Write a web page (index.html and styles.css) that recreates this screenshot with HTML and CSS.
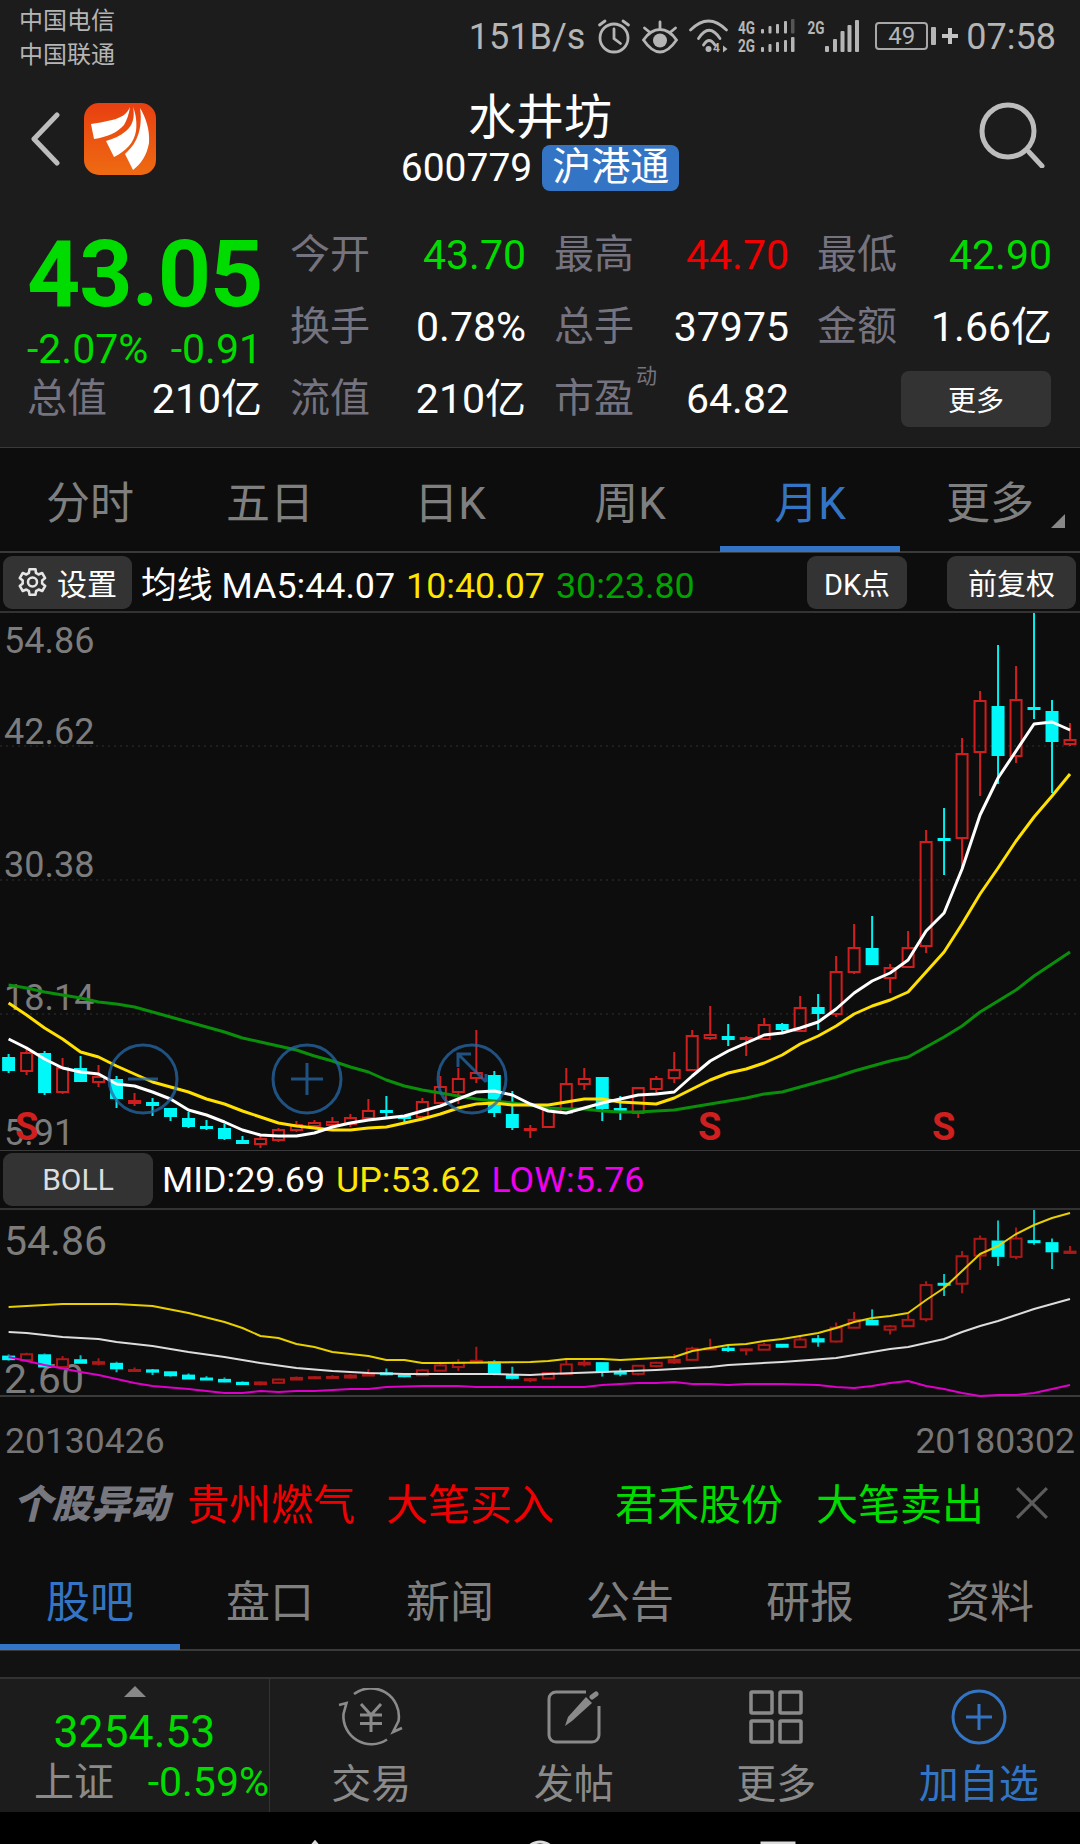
FILE: index.html
```html
<!DOCTYPE html>
<html lang="zh-CN">
<head>
    <meta charset="UTF-8">
    <meta name="viewport" content="width=device-width, initial-scale=1.0">
    <title>水井坊</title>
    <link rel="stylesheet" href="styles.css">
</head>
<body>
    <div class="status-bar">
        <div class="carriers">
            <span>中国电信</span>
            <span>中国联通</span>
        </div>
        <div class="status-right">
            <span class="net-speed">151B/s</span>
            <svg class="ic-alarm" width="34" height="36" viewBox="0 0 34 36" fill="none" stroke="#b5b5b5" stroke-width="2.8" stroke-linecap="round">
                <circle cx="17" cy="19" r="14"/>
                <path d="M17 10v9.500l6.500 5M2.500 6L8 2M31.500 6L26 2"/>
            </svg>
            <svg class="ic-eye" width="36" height="34" viewBox="0 0 36 34" fill="none" stroke="#b5b5b5" stroke-width="2.8" stroke-linecap="round">
                <path d="M1.500 20C7 12 12 9.500 18 9.500s11 2.500 16.500 10.500C29 28 24 32 18 32S7 28 1.500 20z"/>
                <circle cx="18" cy="20.500" r="7" fill="#b5b5b5" stroke="none"/>
                <path d="M2.500 8l5.500 4.500M33.500 8L28 12.500M18 2v6"/>
            </svg>
            <svg class="ic-wifi" width="40" height="36" viewBox="0 0 40 36" fill="none" stroke="#b5b5b5" stroke-width="2.8" stroke-linecap="round">
                <path d="M1.500 11Q19.500 -7 37.500 11M9.500 19.500Q20 3 31 19.500M14.500 26Q20 17 26 26"/>
                <circle cx="19.500" cy="30" r="3" fill="#b5b5b5" stroke="none"/>
                <text x="24" y="33" class="micro-text">4</text>
                <path d="M34 26.500l4.500 3.500-4.500 3.500z" fill="#b5b5b5" stroke="none"/>
            </svg>
            <svg class="ic-sim" width="58" height="36" viewBox="0 0 58 36" fill="#b5b5b5">
                <text x="1" y="14.500" class="tiny-text" textLength="17" lengthAdjust="spacingAndGlyphs">4G</text>
                <text x="1" y="33" class="tiny-text" textLength="17" lengthAdjust="spacingAndGlyphs">2G</text>
                <rect x="24" y="10" width="3" height="4.500" rx="1"/><rect x="31.500" y="7" width="3" height="7.500" rx="1"/><rect x="39" y="5" width="3" height="9.500" rx="1"/><rect x="47" y="2" width="3" height="12.500" rx="1"/><rect x="54" y="0" width="3.500" height="14.500" rx="1" fill="#555"/>
                <rect x="24" y="28" width="3" height="5" rx="1"/><rect x="31.500" y="25" width="3" height="8" rx="1"/><rect x="39" y="23" width="3" height="10" rx="1"/><rect x="47" y="21" width="3" height="12" rx="1"/><rect x="54" y="18" width="3.500" height="15" rx="1"/>
            </svg>
            <svg class="ic-signal" width="54" height="36" viewBox="0 0 54 36" fill="#b5b5b5">
                <text x="1.500" y="15" class="tiny-text" textLength="17" lengthAdjust="spacingAndGlyphs">2G</text>
                <rect x="19" y="27" width="4" height="6" rx="1"/><rect x="27" y="20" width="4" height="13" rx="1"/><rect x="34.500" y="12" width="4" height="21" rx="1"/><rect x="41.500" y="6" width="4" height="27" rx="1"/><rect x="49" y="1" width="4" height="32" rx="1"/>
            </svg>
            <div class="battery">49</div>
            <div class="battery-tip"></div>
            <svg class="ic-charge" width="16" height="16" viewBox="0 0 16 16" fill="#c4c4c4">
                <rect x="6" y="0" width="4" height="16"/><rect x="0" y="6" width="16" height="4"/>
            </svg>
            <span class="clock">07:58</span>
        </div>
    </div>

    <div class="app-header">
        <div class="header-left">
            <svg class="ic-back" width="30" height="54" viewBox="0 0 30 54" fill="none" stroke="#bdbdbd" stroke-width="5" stroke-linecap="round" stroke-linejoin="round">
                <path d="M27 3L4 27l23 24"/>
            </svg>
            <svg class="logo" width="72" height="72" viewBox="0 0 72 72">
                <defs>
                    <linearGradient id="logoBg" x1="0" y1="0" x2="0" y2="1">
                        <stop offset="0" stop-color="#e83f10"/>
                        <stop offset="1" stop-color="#ee6b12"/>
                    </linearGradient>
                </defs>
                <rect width="72" height="72" rx="15" fill="url(#logoBg)"/>
                <path d="M46 4c-3 7-9 11-18 13-8 2-15 3-21 4l3 15c13-2 23-6 30-14 3-5 5-11 6-18z" fill="#fff"/>
                <path d="M49 4c2 10 0 18-7 24-6 5-13 8-20 10l8 16c12-6 20-14 22-26 1-8 0-17-3-24z" fill="#fff"/>
                <path d="M56 5c2 13 0 24-4 32-3 6-7 10-11 14l8 16c8-6 14-15 16-27 1-13-3-25-9-35z" fill="#fff"/>
            </svg>
        </div>
        <div class="header-center">
            <div class="stock-name">水井坊</div>
            <div class="stock-code-line">
                <span>600779</span>
                <span class="hk-badge">沪港通</span>
            </div>
        </div>
        <div class="header-right">
            <svg width="66" height="66" viewBox="0 0 66 66" fill="none" stroke="#bdbdbd" stroke-width="5" stroke-linecap="round">
                <circle cx="29" cy="29" r="26"/>
                <path d="M50 50l13 14"/>
            </svg>
        </div>
    </div>

    <div class="quote">
        <div class="price-box">
            <div class="price">43.05</div>
            <div class="change">
                <span>-2.07%</span>
                <span>-0.91</span>
            </div>
        </div>
        <div class="stat"><span class="stat-label">今开</span><span class="green">43.70</span></div>
        <div class="stat"><span class="stat-label">最高</span><span class="red">44.70</span></div>
        <div class="stat"><span class="stat-label">最低</span><span class="green">42.90</span></div>
        <div class="stat"><span class="stat-label">换手</span><span>0.78%</span></div>
        <div class="stat"><span class="stat-label">总手</span><span>37975</span></div>
        <div class="stat"><span class="stat-label">金额</span><span>1.66亿</span></div>
        <div class="stat"><span class="stat-label">总值</span><span>210亿</span></div>
        <div class="stat"><span class="stat-label">流值</span><span>210亿</span></div>
        <div class="stat stat-pe"><span class="stat-label">市盈</span><span class="pe-mark">动</span><span>64.82</span></div>
        <div class="stat stat-more"><button class="more-btn">更多</button></div>
    </div>

    <div class="tabs period-tabs">
        <div class="tab">分时</div>
        <div class="tab">五日</div>
        <div class="tab">日K</div>
        <div class="tab">周K</div>
        <div class="tab active">月K</div>
        <div class="tab tab-more">更多</div>
    </div>

    <div class="tool-bar">
        <button class="tool-btn btn-setting">
            <svg width="36" height="36" viewBox="0 0 24 24" fill="none" stroke="#e6e6e6" stroke-width="1.700" stroke-linejoin="round">
                <path d="M19.400 13a7.500 7.500 0 0 0 0-2l2-1.600-2-3.400-2.400 1a7.500 7.500 0 0 0-1.700-1L15 3.500h-4l-.4 2.500a7.500 7.500 0 0 0-1.700 1l-2.400-1-2 3.400 2 1.600a7.500 7.500 0 0 0 0 2l-2 1.600 2 3.400 2.400-1a7.500 7.500 0 0 0 1.700 1l.4 2.500h4l.4-2.500a7.500 7.500 0 0 0 1.700-1l2.400 1 2-3.400z"/>
                <circle cx="13" cy="12" r="3"/>
            </svg>
            设置
        </button>
        <div class="legend">
            <span>均线 MA5:44.07</span>
            <span class="yellow">10:40.07</span>
            <span class="dark-green">30:23.80</span>
        </div>
        <button class="tool-btn btn-dk">DK点</button>
        <button class="tool-btn btn-fq">前复权</button>
    </div>

    <div class="chart chart-main">
        <span class="axis-label" data-y="28">54.86</span>
        <span class="axis-label" data-y="119">42.62</span>
        <span class="axis-label" data-y="252">30.38</span>
        <span class="axis-label" data-y="385">18.14</span>
        <span class="axis-label" data-y="520">5.91</span>
        <svg id="mainChart" class="chart-svg" width="1080" height="537"></svg>
        <svg class="chart-svg" width="1080" height="537" fill="none" stroke="#2569a8" stroke-opacity="0.75" stroke-width="3">
            <circle cx="143" cy="466" r="34"/>
            <path d="M128 466h30"/>
            <circle cx="307" cy="466" r="34"/>
            <path d="M291 466h32M307 450v32"/>
            <circle cx="472" cy="466" r="34"/>
            <path d="M458 454v-13h13M458 441l28 28M486 469v-8"/>
        </svg>
        <span class="s-mark s-one">S</span>
        <span class="s-mark s-two">S</span>
        <span class="s-mark s-three">S</span>
    </div>

    <div class="tool-bar boll-bar">
        <button class="tool-btn btn-boll">BOLL</button>
        <div class="legend">
            <span>MID:29.69</span>
            <span class="yellow">UP:53.62</span>
            <span class="magenta">LOW:5.76</span>
        </div>
    </div>

    <div class="chart chart-boll">
        <span class="axis-label axis-big" data-y="31">54.86</span>
        <span class="axis-label axis-big" data-y="169">2.60</span>
        <svg id="bollChart" class="chart-svg" width="1080" height="187"></svg>
    </div>

    <div class="dates">
        <span>20130426</span>
        <span>20180302</span>
    </div>

    <div class="alerts">
        <span class="alerts-title">个股异动</span>
        <span class="alert-text red alert-a">贵州燃气</span>
        <span class="alert-text red alert-b">大笔买入</span>
        <span class="alert-text green alert-c">君禾股份</span>
        <span class="alert-text green alert-d">大笔卖出</span>
        <svg class="alert-close" width="34" height="34" viewBox="0 0 32 32" stroke="#5c5c5c" stroke-width="3">
            <path d="M2 2l28 28M30 2L2 30"/>
        </svg>
    </div>

    <div class="tabs info-tabs">
        <div class="tab active">股吧</div>
        <div class="tab">盘口</div>
        <div class="tab">新闻</div>
        <div class="tab">公告</div>
        <div class="tab">研报</div>
        <div class="tab">资料</div>
    </div>

    <div class="tabs-gap"></div>

    <div class="bottom-bar">
        <div class="index-box">
            <div class="index-arrow"></div>
            <div class="index-value">3254.53</div>
            <div class="index-line">
                <span class="index-name">上证</span>
                <span class="green">-0.59%</span>
            </div>
        </div>
        <div class="bottom-item">
            <svg width="66" height="58" viewBox="0 0 66 58" fill="none" stroke="#8a8a8a" stroke-width="2.600">
                <path d="M16 6A28 28 0 0 1 60.500 33L55 44l9-4"/>
                <path d="M49 51.500A28 28 0 0 1 5.500 26L8.500 15 1 17"/>
                <path d="M23 16l10 11 10-11M33 27v17M22 27h22M22 35.500h22" stroke-width="3"/>
            </svg>
            <span>交易</span>
        </div>
        <div class="bottom-item">
            <svg width="54" height="54" viewBox="0 0 54 54" fill="none" stroke="#8a8a8a" stroke-width="3">
                <path d="M39 2H9a7 7 0 0 0-7 7v36a7 7 0 0 0 7 7h36a7 7 0 0 0 7-7V16"/>
                <path d="M18 36l3-9 18-20 6 6-20 18z" fill="#8a8a8a" stroke="none"/>
                <path d="M45 7l4-3" stroke-width="5" stroke-linecap="round"/>
            </svg>
            <span>发帖</span>
        </div>
        <div class="bottom-item">
            <svg width="54" height="54" viewBox="0 0 54 54" fill="none" stroke="#8a8a8a" stroke-width="3.500">
                <rect x="2" y="2" width="21" height="21" rx="1"/>
                <rect x="31" y="2" width="21" height="21" rx="1"/>
                <rect x="2" y="31" width="21" height="21" rx="1"/>
                <rect x="31" y="31" width="21" height="21" rx="1"/>
            </svg>
            <span>更多</span>
        </div>
        <div class="bottom-item item-blue">
            <svg width="56" height="56" viewBox="0 0 56 56" fill="none" stroke="#3375c4" stroke-width="3">
                <circle cx="28" cy="28" r="26"/>
                <path d="M15 28h26M28 15v26"/>
            </svg>
            <span>加自选</span>
        </div>
    </div>

    <div class="nav-bar">
        <svg width="1080" height="32" fill="none" stroke="#dcdcdc" stroke-width="3">
            <path d="M298 50l17-20 17 20"/>
            <circle cx="540" cy="46" r="16"/>
            <rect x="762" y="31" width="32" height="30"/>
        </svg>
    </div>

    <script src="chart.js"></script>
</body>
</html>
```
FILE: styles.css
```css
* {
    font-family: Roboto, "Noto Sans CJK SC", sans-serif;
    padding: 0;
    margin: 0;
    box-sizing: border-box;
}

body {
    width: 1080px;
    height: 1844px;
    overflow: hidden;
    background-color: #0d0d0d;
    color: #fff;
}

button {
    border: none;
    color: #fff;
}

.green { color: #00dc00; }
.red { color: #f00000; }
.yellow { color: #ffe600; }
.dark-green { color: #00a400; }
.magenta { color: #f000f0; }

/* status bar */
.status-bar {
    height: 90px;
    padding: 4px 24px 0 19px;
    display: flex;
    justify-content: space-between;
    align-items: flex-start;
    background-color: #1c1c1c;
}

.carriers {
    display: flex;
    flex-direction: column;
    font-size: 24px;
    line-height: 34px;
    color: #b5b5b5;
}

.status-right {
    display: flex;
    align-items: center;
    height: 66px;
    color: #b5b5b5;
}

.status-right svg {
    overflow: visible;
}

.net-speed {
    font-size: 36px;
    margin-right: 12px;
}

.clock {
    font-size: 36px;
    margin-left: 8px;
}

.ic-alarm { margin-right: 11px; }
.ic-eye { margin-right: 11px; }
.ic-wifi { margin-right: 8px; }
.ic-sim { margin-right: 11px; }
.ic-signal { margin-right: 15px; }

.tiny-text {
    font-size: 18px;
    font-weight: 700;
    fill: #b5b5b5;
}

.micro-text {
    font-size: 12px;
    font-weight: 700;
    fill: #b5b5b5;
    stroke: none;
}

.battery {
    width: 53px;
    height: 28px;
    margin-bottom: 3px;
    border: 2px solid #a8a8a8;
    border-radius: 4px;
    font-size: 24px;
    line-height: 24px;
    text-align: center;
}

.battery-tip {
    width: 5px;
    height: 18px;
    margin: 0 6px 3px 3px;
    border-radius: 1px;
    background-color: #b5b5b5;
}

.ic-charge { margin-bottom: 3px; }

/* header */
.app-header {
    height: 110px;
    display: grid;
    grid-template-columns: 1fr auto 1fr;
    background-color: #1c1c1c;
}

.header-left {
    display: flex;
    align-items: center;
    padding: 0 0 12px 30px;
}

.logo { margin-left: 24px; }

.header-center {
    display: flex;
    flex-direction: column;
    align-items: center;
}

.stock-name {
    height: 55px;
    font-size: 48px;
    line-height: 55px;
}

.stock-code-line {
    display: flex;
    align-items: center;
    gap: 10px;
    height: 46px;
    font-size: 39px;
}

.hk-badge {
    height: 46px;
    padding: 0 10px;
    font-size: 39px;
    line-height: 44px;
    background-color: #3375c4;
    border-radius: 8px;
}

.header-right {
    display: flex;
    justify-content: flex-end;
    align-items: center;
    padding: 0 35px 20px 0;
}

/* quote */
.quote {
    height: 248px;
    padding: 19px 0 0 27px;
    display: grid;
    grid-template-columns: 235px 236px 235px 235px;
    grid-auto-rows: 72px;
    column-gap: 28px;
    background-color: #1c1c1c;
    border-bottom: 1px solid #3a3a3a;
    font-size: 41px;
}

.price-box {
    grid-row: span 2;
}

.price {
    height: 112px;
    font-size: 93px;
    line-height: 112px;
    font-weight: 700;
    color: #00dc00;
    letter-spacing: -1px;
}

.change {
    display: flex;
    justify-content: space-between;
    margin-top: 2px;
    font-size: 41px;
    line-height: 32px;
    color: #00dc00;
}

.stat {
    position: relative;
    display: flex;
    justify-content: space-between;
    align-items: center;
    line-height: 46px;
}

.stat-label {
    font-size: 40px;
    color: #75737f;
}

.pe-mark {
    position: absolute;
    left: 82px;
    top: -2px;
    font-size: 21px;
    line-height: 30px;
    color: #75737f;
}

.stat-more {
    justify-content: flex-end;
}

.more-btn {
    width: 150px;
    height: 56px;
    margin-right: 1px;
    background-color: #333;
    border-radius: 8px;
    font-size: 28px;
}

/* tabs */
.tabs {
    display: grid;
    grid-template-columns: repeat(6, 180px);
    height: 104px;
    border-bottom: 2px solid #3a3a3a;
    background-color: #0d0d0d;
}

.period-tabs { height: 105px; }

.tab {
    position: relative;
    display: flex;
    justify-content: center;
    align-items: center;
    padding-top: 1px;
    font-size: 44px;
    color: #7f7f7f;
}

.tab.active {
    color: #3375c4;
}

.tab.active::after {
    content: "";
    position: absolute;
    left: 0;
    right: 0;
    bottom: -1px;
    height: 6px;
    background-color: #3375c4;
}

.tab-more::after {
    content: "";
    position: absolute;
    right: 15px;
    bottom: 23px;
    border-left: 14px solid transparent;
    border-bottom: 14px solid #888;
}

.tabs-gap {
    height: 26px;
    background-color: #121212;
}

/* tool bars over the charts */
.tool-bar {
    position: relative;
    height: 60px;
    display: flex;
    align-items: center;
    border-bottom: 2px solid #333;
    background-color: #0d0d0d;
}

.boll-bar {
    border-top: 1px solid #3a3a3a;
}

.tool-btn {
    height: 53px;
    background-color: #333;
    border-radius: 9px;
    font-size: 29px;
    display: flex;
    justify-content: center;
    align-items: center;
}

.btn-setting {
    width: 129px;
    margin-left: 3px;
    padding-left: 10px;
    justify-content: flex-start;
    gap: 8px;
    font-size: 30px;
}

.legend {
    display: flex;
    align-items: baseline;
    gap: 11px;
    margin-left: 9px;
    font-size: 35.8px;
    white-space: nowrap;
}

.btn-dk {
    width: 100px;
    margin-left: auto;
}

.btn-fq {
    width: 129px;
    margin: 0 4px 0 40px;
}

.btn-boll {
    width: 150px;
    margin-left: 3px;
    font-size: 30px;
    color: #ddd;
}

/* charts */
.chart {
    position: relative;
    background-color: #0d0d0d;
}

.chart-main { height: 537px; }
.chart-boll { height: 187px; border-bottom: 2px solid #3a3a3a; }

.chart-svg {
    position: absolute;
    left: 0;
    top: 0;
}

.axis-label {
    position: absolute;
    left: 4px;
    font-size: 36px;
    line-height: 40px;
    color: #7c7c7c;
}

.axis-big {
    font-size: 41px;
}

.s-mark {
    position: absolute;
    top: 492px;
    font-size: 38px;
    line-height: 44px;
    font-weight: 700;
    color: #cf1f1f;
}

.s-one { left: 15px; }
.s-two { left: 698px; }
.s-three { left: 932px; }

.dates {
    height: 72px;
    padding: 24px 5px 0;
    display: flex;
    justify-content: space-between;
    font-size: 35.5px;
    line-height: 40px;
    color: #767676;
}

/* alert strip */
.alerts {
    height: 78px;
    display: flex;
    align-items: center;
    padding-bottom: 14px;
    white-space: nowrap;
}

.alerts-title {
    width: 174px;
    margin-left: 13px;
    font-size: 39px;
    font-weight: 900;
    font-style: italic;
    color: #77777f;
}

.alert-text { font-size: 42px; }
.alert-a { width: 199px; }
.alert-b { width: 229px; }
.alert-c { width: 201px; }
.alert-d { width: 199px; }

.alert-close { margin-top: 4px; }

/* bottom bar */
.bottom-bar {
    height: 135px;
    display: grid;
    grid-template-columns: 270px repeat(4, 202.5px);
    border-top: 2px solid #333;
    background-color: #1c1c1c;
}

.index-box {
    position: relative;
    display: flex;
    flex-direction: column;
    align-items: center;
    padding-top: 27px;
    border-right: 1px solid #333;
}

.index-arrow {
    position: absolute;
    top: 7px;
    left: 124px;
    border-left: 11px solid transparent;
    border-right: 11px solid transparent;
    border-bottom: 11px solid #888;
}

.index-value {
    font-size: 44.5px;
    line-height: 52px;
    color: #00dc00;
}

.index-line {
    display: flex;
    justify-content: space-between;
    align-items: baseline;
    width: 100%;
    margin-top: 1px;
    padding-left: 34px;
    font-size: 41px;
    line-height: 46px;
    white-space: nowrap;
}

.index-name {
    font-size: 40px;
    color: #8a8a8a;
}

.bottom-item {
    display: flex;
    flex-direction: column;
    align-items: center;
    padding-top: 9px;
    font-size: 40px;
    line-height: 50px;
    color: #8a8a8a;
}

.bottom-item svg {
    height: 58px;
    margin-bottom: 14px;
}

.item-blue { color: #3375c4; }

.nav-bar {
    height: 32px;
    overflow: hidden;
    background-color: #000;
}
```
FILE: chart.js
```js
// x of each monthly candle, first one at 8.6, 18px apart
const X0 = 8.6;
const STEP = 17.99;
const MAIN_TOP = 613;
const BOLL_TOP = 1210;
const BOLL_RATIO = 0.3279; // main chart px -> boll chart px

// type, body top, body bottom, wick top, wick bottom (page px of the main chart)
const candles = [
    ['c',1057,1071,1054,1073],['r',1053,1071,1048,1075],['c',1053,1093,1051,1095],['r',1068,1092,1058,1094],
    ['c',1068,1082,1056,1082],['r',1077,1082,1065,1087],['c',1079,1099,1076,1108],['r',1101,1103,1093,1106],
    ['c',1102,1106,1098,1116],['c',1108,1117,1108,1121],['c',1118,1127,1112,1128],['c',1127,1128,1120,1130],
    ['c',1128,1139,1124,1140],['c',1140,1144,1136,1144],['r',1139,1144,1136,1148],['r',1130,1140,1128,1142],
    ['r',1125,1130,1121,1132],['r',1123,1126,1120,1128],['r',1122,1125,1117,1127],['r',1118,1124,1114,1127],
    ['r',1111,1118,1099,1119],['c',1111,1112,1096,1117],['c',1117,1118,1116,1123],['r',1102,1117,1098,1118],
    ['r',1087,1103,1076,1104],['r',1079,1092,1068,1104],['r',1073,1078,1030,1083],['c',1075,1113,1071,1117],
    ['c',1114,1128,1091,1130],['r',1129,1130,1125,1138],['r',1110,1127,1110,1127],['r',1084,1113,1068,1114],
    ['r',1079,1084,1068,1090],['c',1077,1109,1077,1121],['c',1109,1111,1096,1120],['r',1088,1113,1088,1118],
    ['r',1079,1089,1076,1093],['r',1070,1078,1052,1083],['r',1036,1070,1030,1070],['r',1035,1038,1006,1040],
    ['c',1036,1040,1024,1046],['r',1038,1039,1036,1056],['r',1025,1039,1018,1039],['c',1024,1030,1023,1032],
    ['r',1008,1031,996,1032],['c',1007,1014,994,1030],['r',972,1014,956,1017],['r',948,972,924,974],
    ['c',948,965,916,965],['r',968,978,964,993],['r',948,967,931,968],['r',842,946,830,953],
    ['c',838,841,808,875],['r',754,838,738,867],['r',701,752,691,796],['c',706,756,645,784],
    ['r',700,756,666,763],['c',708,709,613,719],['c',711,742,700,793],['r',740,744,723,746]
];

// main chart lines, one y for each candle
const ma5 = [1039,1048,1059,1068,1072,1074,1084,1086,1092,1099,1110,1115,1122,1130,1135,1136,1136,1133,1127,1123,1120,1118,1116,1111,1106,1099,1092,1091,1095,1104,1111,1113,1108,1103,1099,1095,1094,1092,1076,1061,1051,1043,1035,1033,1028,1022,1009,993,981,973,960,931,913,869,815,778,751,724,722,730];
const ma10 = [1003,1015,1028,1039,1052,1057,1066,1074,1082,1087,1092,1099,1104,1111,1117,1123,1126,1128,1130,1130,1128,1127,1123,1119,1114,1108,1104,1103,1105,1105,1105,1102,1099,1099,1102,1103,1104,1098,1089,1080,1073,1069,1063,1055,1044,1036,1026,1014,1006,1000,992,972,952,924,894,868,841,817,796,774];
const ma30 = [985,988,992,995,998,1002,1004,1007,1012,1017,1022,1027,1032,1038,1042,1046,1050,1056,1061,1067,1072,1080,1086,1090,1093,1096,1099,1101,1103,1105,1108,1109,1109,1111,1112,1112,1111,1110,1107,1104,1101,1098,1094,1092,1087,1082,1077,1071,1066,1061,1057,1047,1037,1026,1012,1001,990,976,964,952];

// boll lines, [candle index, page y]
const bollUp = [[0,1307],[3,1304],[6,1304],[8,1306],[10,1313],[12,1322],[13,1328],[14,1336],[15,1338],[16,1344],[17,1347],[18,1352],[20,1356],[21,1360],[22,1360],[23,1363],[24,1363],[29,1362],[30,1361],[31,1359],[32,1359],[33,1359],[34,1360],[35,1359],[36,1358],[37,1357],[38,1351],[39,1348],[40,1345],[41,1344],[42,1341],[43,1339],[44,1336],[45,1333],[46,1328],[47,1322],[48,1318],[49,1316],[50,1313],[51,1300],[52,1288],[53,1271],[54,1254],[55,1246],[56,1234],[57,1225],[58,1218],[59,1213]];
const bollMid = [[0,1332],[1,1333],[3,1337],[5,1339],[6,1342],[8,1346],[10,1352],[12,1357],[14,1363],[16,1368],[18,1371],[20,1373],[22,1374],[27,1374],[29,1375],[30,1374],[33,1372],[36,1370],[39,1367],[40,1365],[43,1362],[46,1358],[47,1355],[48,1352],[49,1349],[50,1347],[51,1343],[52,1339],[53,1332],[54,1326],[55,1321],[56,1315],[57,1309],[58,1304],[59,1299]];
const bollLow = [[0,1357],[2,1365],[4,1372],[5,1375],[7,1383],[8,1386],[10,1389],[12,1393],[13,1393],[14,1391],[15,1392],[16,1391],[17,1391],[19,1389],[20,1389],[21,1387],[23,1386],[25,1386],[26,1387],[32,1387],[33,1385],[35,1383],[36,1383],[37,1382],[38,1384],[39,1384],[40,1385],[41,1384],[43,1384],[45,1385],[46,1387],[47,1388],[48,1386],[49,1383],[50,1381],[51,1386],[52,1389],[53,1393],[54,1396],[55,1395],[56,1395],[57,1393],[58,1389],[59,1385]];

const SVG_NS = 'http://www.w3.org/2000/svg';

function addShape(svg, name, attrs) {
    const el = document.createElementNS(SVG_NS, name);
    for (const key in attrs) {
        el.setAttribute(key, attrs[key]);
    }
    svg.appendChild(el);
}

function xAt(i) {
    return X0 + STEP * i;
}

function drawCandles(svg, mapY, colors, width) {
    candles.forEach((c, i) => {
        const x = xAt(i);
        const [type, bodyTop, bodyBottom, wickTop, wickBottom] = c;
        const top = mapY(bodyTop);
        const bottom = mapY(bodyBottom);
        const color = type === 'r' ? colors.red : colors.wick;
        const fill = type === 'r' ? colors.red : colors.cyan;
        addShape(svg, 'path', {
            d: `M${x} ${mapY(wickTop)}V${top}M${x} ${bottom}V${mapY(wickBottom)}`,
            stroke: color,
            'stroke-width': width
        });
        if (bottom - top < 3) {
            // flat candle, drawn as a bar
            addShape(svg, 'rect', { x: x - 6.5, y: top - 1, width: 13, height: Math.max(bottom - top, 1) + 2, fill: fill });
        } else if (type === 'r') {
            addShape(svg, 'rect', { x: x - 5.5, y: top, width: 11, height: bottom - top, fill: 'none', stroke: colors.red, 'stroke-width': width });
        } else {
            addShape(svg, 'rect', { x: x - 6.5, y: top, width: 13, height: bottom - top, fill: colors.cyan });
        }
    });
}

function drawLine(svg, points, color, width) {
    addShape(svg, 'polyline', {
        points: points.map(p => p.join(',')).join(' '),
        fill: 'none',
        stroke: color,
        'stroke-width': width,
        'stroke-linejoin': 'round'
    });
}

function drawMainChart() {
    const svg = document.getElementById('mainChart');
    [133, 267, 401].forEach(y => {
        addShape(svg, 'path', { d: `M0 ${y}H1080`, stroke: '#333', 'stroke-dasharray': '2 4' });
    });
    drawCandles(svg, y => y - MAIN_TOP, { red: '#d01e1e', cyan: '#00f8f8', wick: '#00f0f0' }, 2);
    const toPoints = values => values.map((y, i) => [xAt(i), y - MAIN_TOP]);
    drawLine(svg, toPoints(ma30), '#0a8f0a', 3);
    drawLine(svg, toPoints(ma10), '#ffe000', 3);
    drawLine(svg, toPoints(ma5), '#ffffff', 3);
}

function drawBollChart() {
    const svg = document.getElementById('bollChart');
    drawCandles(svg, y => (y - MAIN_TOP) * BOLL_RATIO, { red: '#ac1818', cyan: '#00f8f8', wick: '#00c6c6' }, 2);
    const toPoints = list => list.map(p => [xAt(p[0]), p[1] - BOLL_TOP]);
    drawLine(svg, toPoints(bollLow), '#dc00c8', 2);
    drawLine(svg, toPoints(bollMid), '#dddddd', 2);
    drawLine(svg, toPoints(bollUp), '#e8d000', 2);
}

// axis labels sit at the centre y given in the markup
document.querySelectorAll('.axis-label').forEach(label => {
    label.style.top = (label.dataset.y - 20) + 'px';
});

drawMainChart();
drawBollChart();
```
